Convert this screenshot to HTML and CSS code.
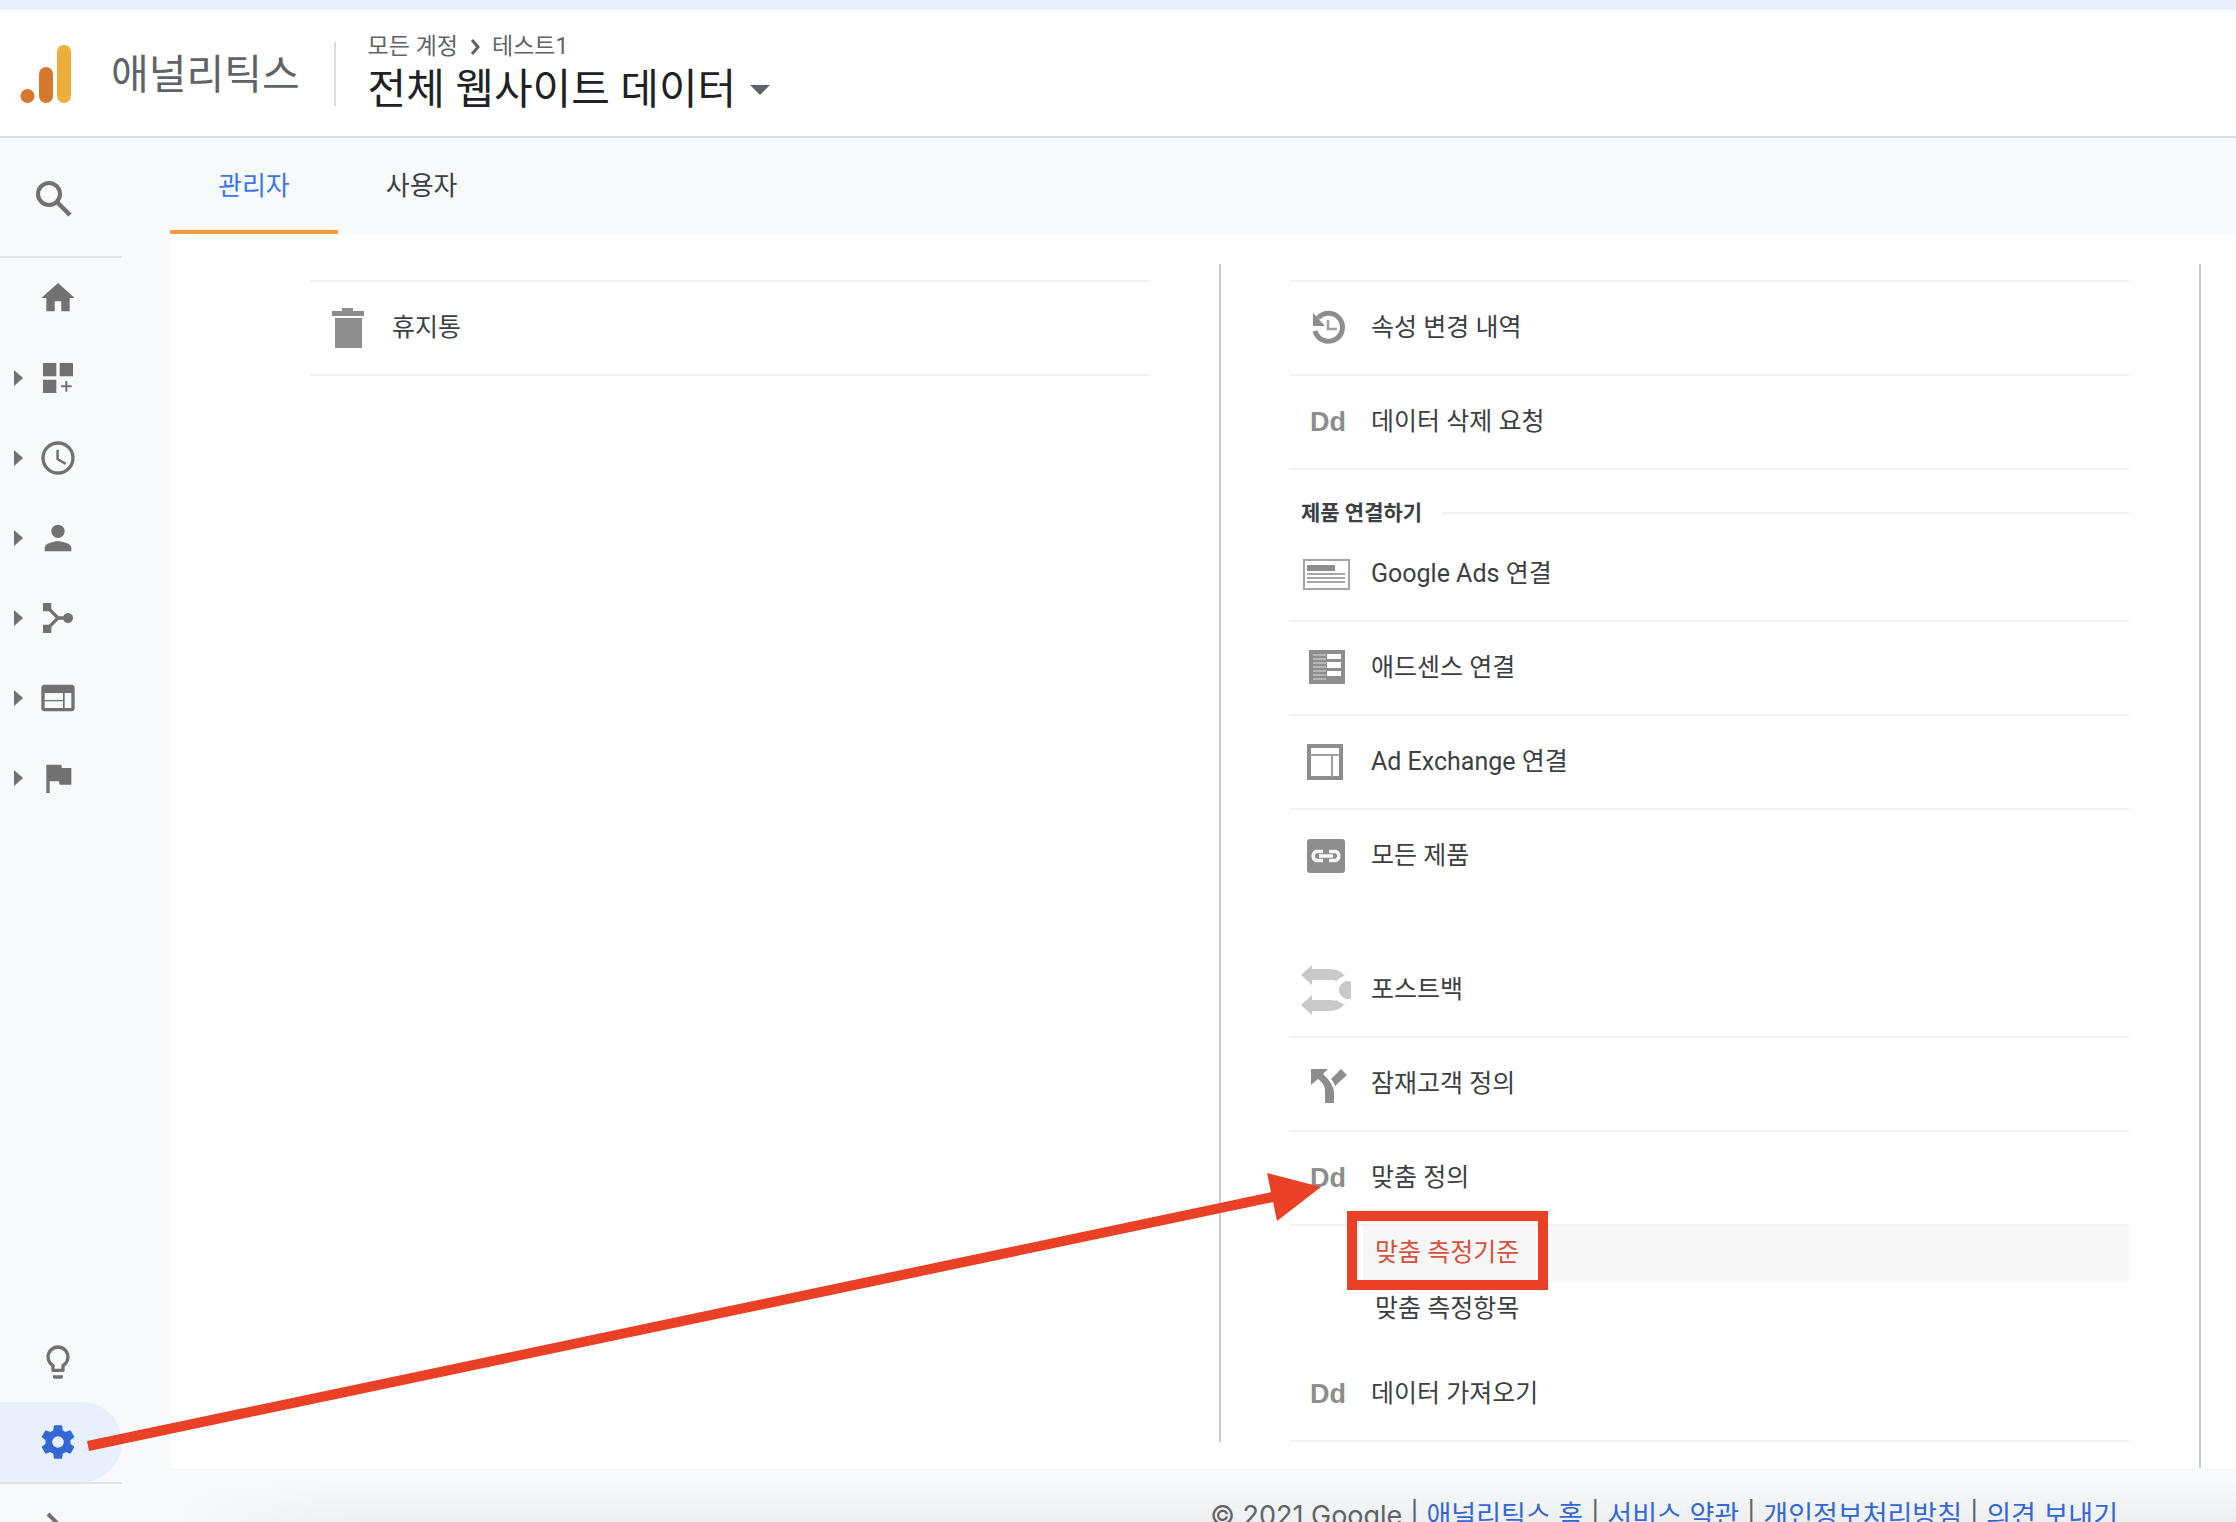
FILE: index.html
```html
<!DOCTYPE html>
<html lang="ko">
<head>
    <meta charset="UTF-8">
    <meta name="viewport" content="width=device-width, initial-scale=1.0">
    <title>애널리틱스</title>
    <link rel="stylesheet" href="styles.css">
</head>
<body>
    <header class="header">
        <a href="#" class="brand">
            <svg class="logo" viewBox="0 0 52 58">
                <rect x="37" y="0" width="14" height="58" rx="7" fill="#eeae3c"/>
                <rect x="19" y="22" width="14" height="36" rx="7" fill="#d5782d"/>
                <circle cx="7.500" cy="51" r="7" fill="#d5782d"/>
            </svg>
            <span class="brand-name">애널리틱스</span>
        </a>
        <div class="account">
            <div class="breadcrumb">
                <span>모든 계정</span>
                <svg class="crumb-arrow" viewBox="0 0 10 16"><path d="M2 1l6 7-6 7" fill="none" stroke="#5f6368" stroke-width="3"/></svg>
                <span>테스트1</span>
            </div>
            <button type="button" class="view-picker">전체 웹사이트 데이터<span class="caret"></span></button>
        </div>
    </header>

    <div class="layout">
        <nav class="sidebar">
            <button type="button" class="search" aria-label="검색">
                <svg viewBox="0 0 36 36"><circle cx="13" cy="13" r="11" fill="none" stroke="currentColor" stroke-width="4"/><path d="M21 21l13 13" stroke="currentColor" stroke-width="4.500"/></svg>
            </button>
            <a href="#" class="nav-item" aria-label="홈">
                <svg class="nav-icon" viewBox="0 0 24 24"><path d="M10 20v-6h4v6h5v-8h3L12 3 2 12h3v8z"/></svg>
            </a>
            <a href="#" class="nav-item has-children" aria-label="맞춤설정">
                <svg class="nav-icon" viewBox="0 0 24 24"><path d="M3 3h8v8H3zM13 3h8v8h-8zM3 13h8v8H3zM16.400 13.800h1.200v2.600h2.600v1.200h-2.600v2.600h-1.200v-2.600h-2.600v-1.200h2.600z"/></svg>
            </a>
            <a href="#" class="nav-item has-children" aria-label="실시간">
                <svg class="nav-icon" viewBox="0 0 24 24"><path d="M12 2a10 10 0 1 0 0 20 10 10 0 0 0 0-20zm0 18a8 8 0 1 1 0-16 8 8 0 0 1 0 16zM12.500 7H11v6l5.250 3.150.75-1.230-4.500-2.670z"/></svg>
            </a>
            <a href="#" class="nav-item has-children" aria-label="잠재고객">
                <svg class="nav-icon" viewBox="0 0 24 24"><circle cx="12" cy="8" r="4"/><path d="M4 20v-2c0-2.660 5.330-4 8-4s8 1.340 8 4v2z"/></svg>
            </a>
            <a href="#" class="nav-item has-children" aria-label="획득">
                <svg class="nav-icon" viewBox="0 0 24 24"><path d="M3 3h5v3.600L12.400 11h2.800a3 3 0 1 1 0 2h-2.800L8 17.400V21H3v-5h3.600l4-4-4-4H3z"/></svg>
            </a>
            <a href="#" class="nav-item has-children" aria-label="행동">
                <svg class="nav-icon" viewBox="0 0 24 24"><path fill-rule="evenodd" d="M4 4h16a2 2 0 0 1 2 2v12a2 2 0 0 1-2 2H4a2 2 0 0 1-2-2V6a2 2 0 0 1 2-2zM4 9v4.200h11V9zM4 14v4h11v-4zM16 9v9h4V9z"/></svg>
            </a>
            <a href="#" class="nav-item has-children" aria-label="전환">
                <svg class="nav-icon" viewBox="0 0 24 24"><path d="M14.400 6L14 4H5v17h2v-7h5.600l.4 2h7V6z"/></svg>
            </a>
            <div class="nav-bottom">
                <a href="#" class="nav-item" aria-label="통계">
                    <svg class="nav-icon" viewBox="0 0 24 24"><path d="M9 21c0 .550.450 1 1 1h4c.550 0 1-.450 1-1v-1H9zm3-19a7 7 0 0 0-4 12.740V17c0 .550.450 1 1 1h6c.550 0 1-.450 1-1v-2.260A7 7 0 0 0 12 2zm2.850 11.100l-.850.600V16h-4v-2.300l-.850-.600A5 5 0 1 1 14.850 13.100z"/></svg>
                </a>
                <a href="#" class="nav-item active" aria-label="관리">
                    <svg class="nav-icon" viewBox="0 0 24 24"><path d="M19.430 12.980c.040-.320.070-.640.070-.980s-.030-.660-.070-.980l2.110-1.650c.190-.150.240-.420.120-.640l-2-3.460c-.120-.220-.390-.300-.610-.220l-2.490 1c-.520-.400-1.080-.730-1.690-.980l-.380-2.650A.488.488 0 0 0 14 2h-4c-.250 0-.460.180-.490.420l-.380 2.650c-.610.250-1.170.590-1.690.980l-2.490-1c-.230-.090-.490 0-.610.220l-2 3.460c-.130.220-.070.490.120.640l2.110 1.650c-.040.320-.070.650-.070.980s.030.660.070.980l-2.110 1.650c-.190.150-.240.420-.120.640l2 3.460c.120.220.390.300.610.220l2.490-1c.520.400 1.080.730 1.690.980l.380 2.650c.030.240.240.420.490.420h4c.250 0 .460-.180.490-.420l.380-2.650c.610-.250 1.170-.590 1.690-.980l2.490 1c.230.090.490 0 .610-.220l2-3.460c.120-.220.070-.490-.120-.640zM12 15.500a3.500 3.500 0 1 1 0-7 3.500 3.500 0 0 1 0 7z"/></svg>
                </a>
                <button type="button" class="expand" aria-label="펼치기">
                    <svg viewBox="0 0 20 32"><path d="M2 2l13 13L2 28" fill="none" stroke="currentColor" stroke-width="4"/></svg>
                </button>
            </div>
        </nav>

        <main class="main">
            <div class="tabs">
                <a href="#" class="tab selected">관리자</a>
                <a href="#" class="tab">사용자</a>
            </div>

            <div class="columns">
                <section class="column account-column">
                    <ul class="menu">
                        <li><a href="#" class="row">
                            <svg class="icon" viewBox="0 0 50 50"><path d="M20 5h11v3h11v5H10V8h10zM13 15h27v30H13z"/></svg>
                            <span class="label">휴지통</span>
                        </a></li>
                    </ul>
                </section>

                <section class="column property-column">
                    <ul class="menu">
                        <li><a href="#" class="row">
                            <svg class="icon" viewBox="0 0 50 50"><path d="M17 15a14 14 0 1 1-3 13" fill="none" stroke="#8d8d8d" stroke-width="5"/><path d="M12 10v13h12z"/><path d="M27 17v9h9" fill="none" stroke="#a0a0a0" stroke-width="2.500"/></svg>
                            <span class="label">속성 변경 내역</span>
                        </a></li>
                        <li><a href="#" class="row"><span class="icon dd">Dd</span><span class="label">데이터 삭제 요청</span></a></li>
                    </ul>
                    <h2 class="group-title">제품 연결하기</h2>
                    <ul class="menu linked">
                        <li><a href="#" class="row">
                            <svg class="icon" viewBox="0 0 50 50"><path d="M3 11h45v29H3z" fill="#fff" stroke="#a5a5a5" stroke-width="2"/><path d="M6 16h28v6H6z"/><path d="M6 25h38M6 29h38M6 33h38" stroke="#a5a5a5" stroke-width="2"/></svg>
                            <span class="label">Google Ads 연결</span>
                        </a></li>
                        <li><a href="#" class="row">
                            <svg class="icon" viewBox="0 0 50 50"><path d="M8 7h36v34H8z"/><path d="M12 12h13M12 16h13M12 20h13M12 24h13M12 28h13M12 32h13M12 36h13" stroke="#b5b5b5" stroke-width="2"/><path d="M26 11h14v5H26zM26 19h14v6H26zM26 28h14v5H26z" fill="#fff"/></svg>
                            <span class="label">애드센스 연결</span>
                        </a></li>
                        <li><a href="#" class="row">
                            <svg class="icon" viewBox="0 0 50 50"><path d="M8 9h32v32H8z" fill="none" stroke="#8d8d8d" stroke-width="4"/><path d="M9 18h30M31 18v22" stroke="#a0a0a0" stroke-width="2"/></svg>
                            <span class="label">Ad Exchange 연결</span>
                        </a></li>
                        <li><a href="#" class="row last">
                            <svg class="icon" viewBox="0 0 50 50"><rect x="6" y="8" width="38" height="34" rx="3"/><path d="M22 20.500h-7a5 5 0 0 0 0 9h7M28 20.500h7a5 5 0 0 1 0 9h-7M18 25h14" fill="none" stroke="#f7f7f7" stroke-width="3.500"/></svg>
                            <span class="label">모든 제품</span>
                        </a></li>
                    </ul>
                    <ul class="menu linked">
                        <li><a href="#" class="row">
                            <svg class="icon faded" viewBox="0 0 50 50"><path d="M0 10L11 0v4h18q9 0 15 7-6 1-8 5-2-1-6-1H11v5zM0 40l11 10v-4h18q9 0 15-7-6-1-8-4-2 1-6 0H11v-5z"/><path d="M50 16.500a9 9 0 1 0 0 17z"/></svg>
                            <span class="label">포스트백</span>
                        </a></li>
                        <li><a href="#" class="row">
                            <svg class="icon" viewBox="0 0 50 50"><path d="M10 10h17l-5 5q10 9 11 18v11h-9V32q0-7-7-12l-7 6z"/><path d="M30 20l10-10 6 6-12 11q-1-4-4-7z"/></svg>
                            <span class="label">잠재고객 정의</span>
                        </a></li>
                        <li>
                            <a href="#" class="row"><span class="icon dd">Dd</span><span class="label">맞춤 정의</span></a>
                            <ul class="submenu">
                                <li><a href="#" class="subrow current">맞춤 측정기준</a></li>
                                <li><a href="#" class="subrow">맞춤 측정항목</a></li>
                            </ul>
                        </li>
                        <li><a href="#" class="row"><span class="icon dd">Dd</span><span class="label">데이터 가져오기</span></a></li>
                    </ul>
                </section>
                <section class="column view-column"></section>
            </div>

            <footer class="footer">
                © 2021 Google | <a href="#">애널리틱스 홈</a> | <a href="#">서비스 약관</a> | <a href="#">개인정보처리방침</a> | <a href="#">의견 보내기</a>
            </footer>
        </main>
    </div>

    <!-- Guide drawn over the page -->
    <svg class="guide" viewBox="0 0 2236 1522">
        <path d="M88 1446L1273 1197" stroke="#ea4025" stroke-width="10"/>
        <path d="M1267 1173l54 14-44 34z" fill="#ea4025"/>
        <rect x="1352" y="1216" width="191" height="69" fill="none" stroke="#ea4025" stroke-width="10"/>
    </svg>
</body>
</html>
```
FILE: styles.css
```css
:root {
    --text: #3c4043;
    --grey: #5f6368;
    --icon: #717171;
    --blue: #3367d6;
    --line: #f1f1f1;
    --surface: #f8f9fb;
}

* {
    margin: 0;
    padding: 0;
    box-sizing: border-box;
}

body {
    position: relative;
    display: flex;
    flex-direction: column;
    height: 100vh;
    overflow: hidden;
    border-top: 10px solid #e8effd;
    background-color: #fff;
    color: var(--text);
    font-family: Roboto, "Noto Sans CJK KR", sans-serif;
    font-size: 25px;
}

a {
    color: inherit;
    text-decoration: none;
}

button {
    border: none;
    background: none;
    color: inherit;
    font: inherit;
    cursor: pointer;
}

ul {
    list-style: none;
}

svg {
    display: block;
    fill: currentColor;
}

/* Header */
.header {
    display: flex;
    align-items: center;
    flex: none;
    height: 128px;
    padding: 2px 0 0 20px;
    border-bottom: 2px solid #dadce0;
}

.brand {
    display: flex;
    align-items: center;
    gap: 39px;
    height: 64px;
    padding-right: 34px;
    border-right: 2px solid #dadce0;
    color: var(--grey);
    font-size: 41px;
}

.brand-name {
    padding-bottom: 6px;
}

.logo {
    width: 52px;
    height: 58px;
}

.account {
    padding-left: 32px;
}

.breadcrumb {
    display: flex;
    align-items: center;
    gap: 12px;
    margin-bottom: 2px;
    color: var(--grey);
    font-size: 23px;
    line-height: 30px;
}

.crumb-arrow {
    width: 10px;
    height: 16px;
}

.view-picker {
    display: flex;
    align-items: center;
    gap: 14px;
    color: #202124;
    font-size: 42px;
    line-height: 52px;
}

.caret {
    border: 10px solid transparent;
    border-top-color: var(--grey);
    border-bottom: none;
}

/* Sidebar */
.layout {
    display: flex;
    flex: 1;
    min-height: 0;
    background-color: var(--surface);
}

.sidebar {
    display: flex;
    flex-direction: column;
    flex: none;
    width: 122px;
    margin-right: 48px;
    color: var(--icon);
}

.search {
    flex: none;
    height: 120px;
    padding: 4px 0 0 36px;
    border-bottom: 2px solid #e3e4e6;
}

.search svg {
    width: 36px;
}

.nav-item {
    display: flex;
    align-items: center;
    height: 80px;
    padding-left: 38px;
}

.nav-icon {
    width: 40px;
    height: 40px;
}

.has-children {
    padding-left: 14px;
}

.has-children::before {
    content: "";
    margin-right: 15px;
    border: 8px solid transparent;
    border-left: 9px solid var(--icon);
    border-right: none;
}

.active {
    border-radius: 0 40px 40px 0;
    background-color: #e8effd;
    color: var(--blue);
}

.nav-bottom {
    margin-top: auto;
}

.expand {
    display: block;
    width: 100%;
    height: 40px;
    padding: 28px 0 0 46px;
    overflow: hidden;
    border-top: 2px solid #e3e4e6;
}

.expand svg {
    width: 20px;
}

/* Main */
.main {
    display: flex;
    flex-direction: column;
    flex: 1;
}

.tabs {
    display: flex;
    flex: none;
}

.tab {
    height: 96px;
    padding: 0 48px;
    border-bottom: 4px solid transparent;
    font-size: 26px;
    line-height: 96px;
}

.selected {
    border-color: #ee9d3a;
    color: #3b78e7;
}

.columns {
    display: grid;
    grid-template-columns: 1049fr 980fr 37fr;
    align-items: start;
    padding-top: 30px;
    background-color: #fff;
}

.column {
    padding-top: 16px;
}

.account-column {
    padding-left: 140px;
    padding-right: 70px;
}

.property-column {
    margin-bottom: 26px;
    padding-left: 68px;
    padding-right: 70px;
    border-left: 2px solid #c9cacb;
}

.view-column {
    align-self: stretch;
    border-left: 2px solid #c9cacb;
}

.menu {
    border-top: 2px solid var(--line);
}

.linked {
    border-top: none;
}

.linked + .linked {
    margin-top: 40px;
}

.row {
    display: flex;
    align-items: center;
    gap: 20px;
    height: 94px;
    padding-left: 12px;
    border-bottom: 2px solid var(--line);
}

.label {
    padding-bottom: 6px;
}

.last {
    border-color: transparent;
}

.icon {
    flex: none;
    width: 50px;
    height: 50px;
    color: #8d8d8d;
}

.faded {
    color: #c9c9c9;
}

.dd {
    padding-left: 9px;
    font-family: "Liberation Sans", Arial, sans-serif;
    font-size: 27px;
    font-weight: bold;
    line-height: 50px;
}

.group-title {
    display: flex;
    align-items: center;
    gap: 20px;
    height: 58px;
    padding: 28px 0 0 12px;
    font-size: 21px;
    line-height: 30px;
}

.group-title::after {
    content: "";
    flex: 1;
    border-top: 2px solid var(--line);
}

.submenu {
    padding: 0 0 10px 74px;
}

.subrow {
    display: block;
    height: 56px;
    padding-left: 12px;
    line-height: 54px;
}

.current {
    background-color: #f7f7f7;
    color: #d8513c;
}

.footer {
    flex: 1;
    padding: 26px 118px 0 0;
    background:
        linear-gradient(to right, var(--surface), transparent 200px),
        linear-gradient(var(--surface) 12px, #eeeff0 54px);
    color: var(--grey);
    font-family: Inter, "Noto Sans CJK KR", sans-serif;
    font-size: 27px;
    line-height: 44px;
    text-align: right;
    white-space: nowrap;
}

.footer a {
    color: var(--blue);
}

.guide {
    position: absolute;
    top: -10px;
    left: 0;
    width: 100%;
    pointer-events: none;
}
```
